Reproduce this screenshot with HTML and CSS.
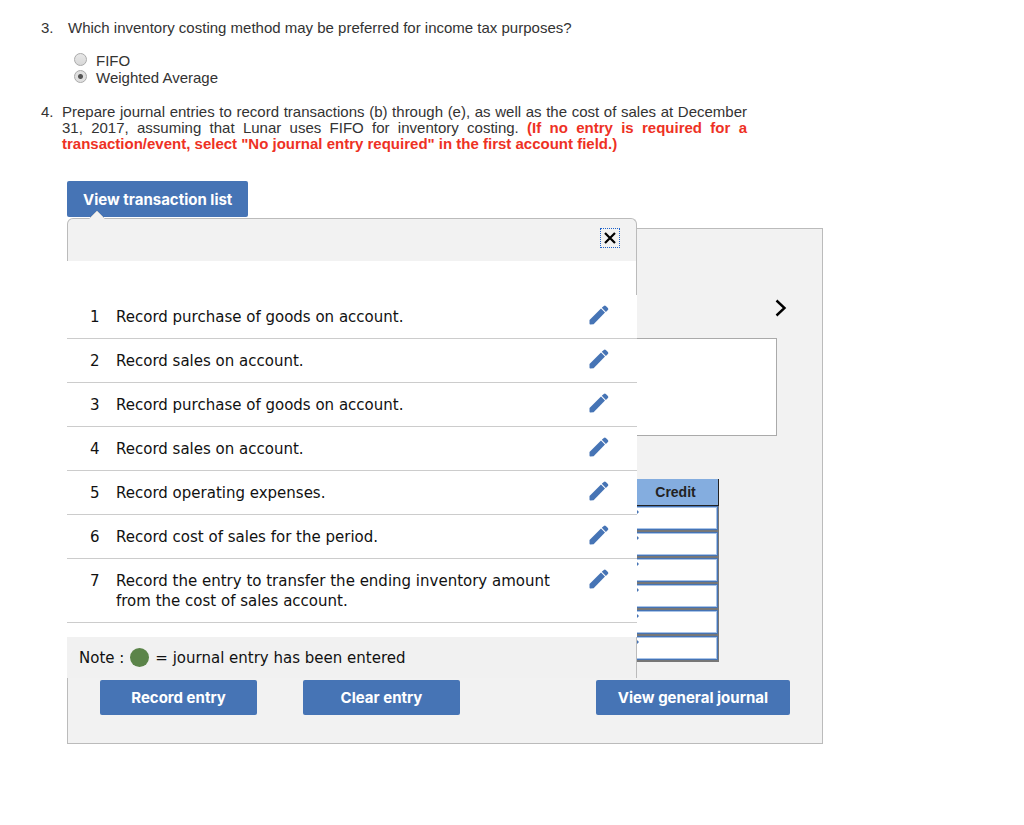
FILE: index.html
```html
<!DOCTYPE html>
<html lang="en">
  <head>
    <meta charset="UTF-8" />
    <meta name="viewport" content="width=device-width, initial-scale=1.0" />
    <title>Inventory costing</title>
    <link rel="stylesheet" href="styles.css">
  </head>
  <body>
    <!-- Shared icons -->
    <svg class="sprite" aria-hidden="true">
      <symbol id="pencil" viewBox="0 0 20 20">
        <path d="M0.5 15 L12 3.6 L16 7.6 L4.6 19.3 L1.4 19.5 Q0.5 19.5 0.5 18.6 Z" />
        <path d="M12.8 2.8 L14.8 0.9 Q15.8 0 16.8 0.9 L18.9 3 Q19.8 4 18.9 5 L16.9 6.9 Z" />
      </symbol>
    </svg>

    <main class="page">
      <!-- Question 3 -->
      <section class="question">
        <span class="number">3.</span>
        <fieldset class="choices">
          <legend>Which inventory costing method may be preferred for income tax purposes?</legend>
          <label class="choice"><input type="radio" name="method" /> FIFO</label>
          <label class="choice"><input type="radio" name="method" checked /> Weighted Average</label>
        </fieldset>
      </section>

      <!-- Question 4 -->
      <section class="question question-text">
        <span class="number">4.</span>
        <p>
          Prepare journal entries to record transactions (b) through (e), as well as the cost of sales at December 31, 2017, assuming that Lunar uses FIFO for inventory costing.
          <strong>(If no entry is required for a transaction/event, select "No journal entry required" in the first account field.)</strong>
        </p>
      </section>

      <div class="journal">
        <button class="btn btn-list" type="button">View transaction list</button>

        <div class="stage">
          <!-- Worksheet -->
          <section class="worksheet">
            <button class="next" type="button" aria-label="Next">
              <svg viewBox="0 0 12 18" width="12" height="18"><path d="M1.5 1.5 L9.5 9 L1.5 16.5" /></svg>
            </button>
            <div class="description"></div>
            <table class="entries">
              <thead>
                <tr><th>Credit</th></tr>
              </thead>
              <tbody>
                <tr><td><input type="text" aria-label="Credit" /></td></tr>
                <tr><td><input type="text" aria-label="Credit" /></td></tr>
                <tr><td><input type="text" aria-label="Credit" /></td></tr>
                <tr><td><input type="text" aria-label="Credit" /></td></tr>
                <tr><td><input type="text" aria-label="Credit" /></td></tr>
                <tr><td><input type="text" aria-label="Credit" /></td></tr>
              </tbody>
            </table>
            <div class="actions">
              <button class="btn" type="button">Record entry</button>
              <button class="btn" type="button">Clear entry</button>
              <button class="btn btn-journal" type="button">View general journal</button>
            </div>
          </section>

          <!-- Transaction list popup -->
          <section class="popup">
            <header class="popup-header">
              <svg class="caret" viewBox="0 0 18 10" width="18" height="10"><path d="M1 9 L9 1 L17 9" /></svg>
              <button class="close" type="button" aria-label="Close">
                <svg viewBox="0 0 12 12" width="12" height="12"><path d="M1 1 L11 11 M11 1 L1 11" /></svg>
              </button>
            </header>
            <div class="popup-space"></div>
            <ul class="transactions">
              <li>
                <span class="index">1</span>
                <span class="label">Record purchase of goods on account.</span>
                <button class="edit" type="button" aria-label="Edit 1"><svg><use href="#pencil" /></svg></button>
              </li>
              <li>
                <span class="index">2</span>
                <span class="label">Record sales on account.</span>
                <button class="edit" type="button" aria-label="Edit 2"><svg><use href="#pencil" /></svg></button>
              </li>
              <li>
                <span class="index">3</span>
                <span class="label">Record purchase of goods on account.</span>
                <button class="edit" type="button" aria-label="Edit 3"><svg><use href="#pencil" /></svg></button>
              </li>
              <li>
                <span class="index">4</span>
                <span class="label">Record sales on account.</span>
                <button class="edit" type="button" aria-label="Edit 4"><svg><use href="#pencil" /></svg></button>
              </li>
              <li>
                <span class="index">5</span>
                <span class="label">Record operating expenses.</span>
                <button class="edit" type="button" aria-label="Edit 5"><svg><use href="#pencil" /></svg></button>
              </li>
              <li>
                <span class="index">6</span>
                <span class="label">Record cost of sales for the period.</span>
                <button class="edit" type="button" aria-label="Edit 6"><svg><use href="#pencil" /></svg></button>
              </li>
              <li>
                <span class="index">7</span>
                <span class="label">Record the entry to transfer the ending inventory amount from the cost of sales account.</span>
                <button class="edit" type="button" aria-label="Edit 7"><svg><use href="#pencil" /></svg></button>
              </li>
            </ul>
            <footer class="note">
              <span>Note :</span>
              <span class="dot"></span>
              <span>= journal entry has been entered</span>
            </footer>
          </section>
        </div>
      </div>
    </main>
  </body>
</html>
```

FILE: styles.css
```css
* {
  box-sizing: border-box;
}

body {
  margin: 0;
  background-color: #fff;
  color: #333;
  font-family: "Liberation Sans", Arial, sans-serif;
  font-size: 15px;
  line-height: 16px;
}

button {
  border: none;
  padding: 0;
  background: none;
  cursor: pointer;
}

.sprite {
  display: none;
}

.page {
  max-width: 824px;
  padding: 20px 1px 80px 41px;
}

/* Questions */
.question {
  display: flex;
}

.number {
  flex: none;
  width: 21px;
}

.choices {
  margin: 0;
  padding: 0 0 0 6px;
  border: none;
}

.choices legend {
  padding: 0;
  margin-bottom: 16px;
}

.choice {
  display: flex;
  align-items: center;
  gap: 9px;
  margin-left: 6px;
  line-height: 17px;
}

.choice input {
  appearance: none;
  width: 13px;
  height: 13px;
  margin: 0 0 2px;
  border: 1px solid #aaa;
  border-radius: 50%;
  background: linear-gradient(#e8e8e8, #d8d8d8);
}

.choice input:checked {
  background: radial-gradient(circle, #555 0 2px, #e0e0e0 3px);
}

.question-text {
  max-width: 706px;
  margin-top: 18px;
}

.question-text p {
  margin: 0;
  text-align: justify;
}

.question-text strong {
  color: #ee3124;
}

/* Buttons */
.btn {
  min-width: 157px;
  height: 35px;
  padding: 0 22px;
  border-radius: 2px;
  background-color: #4674b5;
  color: #fff;
  font-family: Inter, sans-serif;
  font-size: 15px;
  font-weight: 700;
}

.btn-list {
  display: block;
  height: 36px;
  padding: 0 16px;
}

.journal {
  margin: 29px 0 0 26px;
}

.stage {
  position: relative;
  padding-top: 10px;
  margin-top: 1px;
}

/* Worksheet */
.worksheet {
  display: flex;
  flex-direction: column;
  align-items: flex-end;
  border: 1px solid #bbb;
  background-color: #f2f2f2;
}

.next {
  width: 12px;
  height: 18px;
  margin: 70px 35px 21px;
}

.next path,
.close path {
  fill: none;
  stroke: #000;
  stroke-width: 2.4;
}

.next svg,
.close svg,
.edit svg {
  display: block;
}

.description {
  align-self: stretch;
  height: 98px;
  margin: 0 45px;
  border: 1px solid #aaa;
  background-color: #fff;
}

.entries {
  margin: 43px 103px 18px;
  border-collapse: separate;
  border-spacing: 0;
}

.entries th {
  width: 86px;
  height: 27px;
  padding: 0;
  border-right: 1px solid #222;
  border-bottom: 1px solid #222;
  background-color: #84addf;
  color: #222;
  font-size: 14px;
}

.entries td {
  position: relative;
  padding: 0;
  border-right: 1px solid #777;
  border-bottom: 2px solid #777;
}

.entries td::before {
  content: "";
  position: absolute;
  top: 3px;
  left: 3px;
  border: 3px solid transparent;
  border-left-color: #4674b5;
}

.entries input {
  display: block;
  width: 85px;
  height: 24px;
  border: 1px solid #4674b5;
  background-color: #fff;
  box-shadow: inset 0 0 0 1px #a9c4e8;
}

.actions {
  display: flex;
  align-self: stretch;
  gap: 46px;
  padding: 0 32px 28px;
}

.btn-journal {
  margin-left: auto;
}

/* Transaction list */
.popup {
  position: absolute;
  top: 0;
  left: 0;
  width: 570px;
  color: #111;
  font-family: "DejaVu Sans", Verdana, sans-serif;
  font-size: 15px;
  line-height: 20px;
}

.popup-header {
  position: relative;
  display: flex;
  justify-content: flex-end;
  padding: 9px 16px 13px;
  border: 1px solid #bbb;
  border-bottom: none;
  border-radius: 6px 6px 0 0;
  background-color: #f2f2f2;
}

.caret {
  position: absolute;
  top: -9px;
  left: 20px;
  fill: #f2f2f2;
  stroke: #ccc;
}

.close {
  padding: 3px;
  border: 1px dotted #1f62c9;
}

.close path {
  stroke-width: 2.2;
}

.popup-space {
  height: 34px;
  border-right: 1px solid #bbb;
  background-color: #fff;
}

.transactions {
  margin: 0;
  padding: 0 0 14px;
  background-color: #fff;
  list-style: none;
}

.transactions li {
  display: flex;
  padding: 12px 28px 11px 23px;
  border-bottom: 1px solid #ccc;
}

.index {
  flex: none;
  width: 26px;
}

.label {
  flex: 1;
  padding-right: 30px;
}

.edit {
  width: 20px;
  height: 20px;
  margin-top: -2px;
}

.edit svg {
  width: 20px;
  height: 20px;
  fill: #4674b5;
}

.note {
  display: flex;
  align-items: center;
  gap: 6px;
  height: 41px;
  padding-left: 12px;
  border-right: 1px solid #bbb;
  background-color: #f1f1f1;
}

.dot {
  width: 19px;
  height: 19px;
  border-radius: 50%;
  background-color: #5b8449;
}
```
